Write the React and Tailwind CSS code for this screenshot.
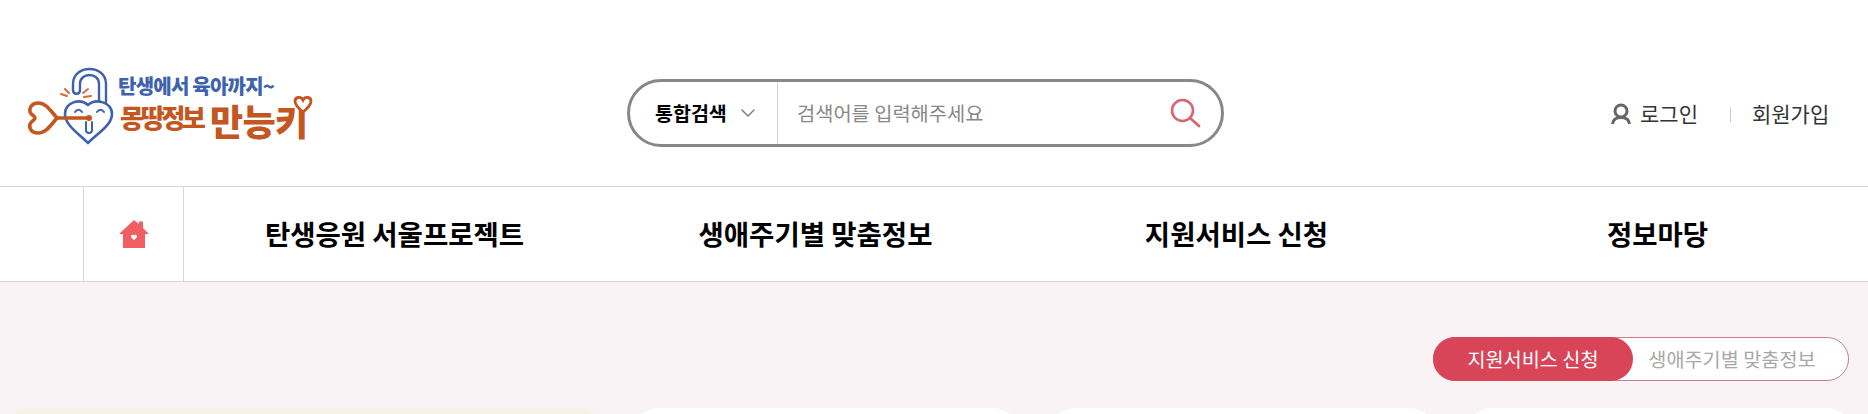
import { ChevronDown } from 'lucide-react';

const FONT = "font-['Noto_Sans_CJK_KR','Noto_Sans',sans-serif]";
const NAV = ['탄생응원 서울프로젝트', '생애주기별 맞춤정보', '지원서비스 신청', '정보마당'];

// logo is a drawing, the words in it stay real text
function Logo() {
    return (
        <svg width="300" height="90" viewBox="0 0 300 90" className="shrink-0">
            <g fill="none" strokeLinecap="round" strokeLinejoin="round">
                <path d="M86 42V24C86 4 53 4 53 24V30C53 35 60 35 60 30V24C60 12 79 12 79 24V40" stroke="#3f62ad" strokeWidth="2.4" />
                <path d="M68 83C58 73 45 65 45 54C45 42 60 38 68 45C76 38 92 42 92 54C92 65 78 73 68 83Z" stroke="#3f62ad" strokeWidth="2.6" />
                <path d="M55 52C57 49 60 49 62 52M77 52C79 49 82 49 84 52" stroke="#3f62ad" strokeWidth="2" />
                <path d="M66 62V70C66 74 72 74 72 70V62" stroke="#3f62ad" strokeWidth="2" />
                <path d="M41 34L47 36M45 29L49 33M63 33L68 29M64 37L71 36" stroke="#d9683c" strokeWidth="2" />
                <path d="M37 58C30 50 26 43 18 43C11 43 9 49 10 52C11 55 15 56 15 58C15 60 11 61 10 64C9 68 11 73 18 73C26 73 30 66 37 58Z" stroke="#c4561f" strokeWidth="3.6" />
                <path d="M37 58H68" stroke="#c4561f" strokeWidth="3.6" />
            </g>
            <circle cx="69" cy="58" r="3" fill="#c4561f" />
            <text x="98" y="34" fontSize="20" fontWeight="900" fill="#3f62ad" fontFamily="'Noto Sans CJK KR',sans-serif" textLength="157">탄생에서 육아까지~</text>
            <text x="100" y="68" fontSize="26" fontWeight="900" fill="#c4561f" fontFamily="'Noto Sans CJK KR',sans-serif" textLength="86">몽땅정보</text>
            <text x="190" y="76" fontSize="36" fontWeight="900" fill="#c4561f" fontFamily="'Noto Sans CJK KR',sans-serif" textLength="98">만능키</text>
            <path d="M283 52C278 48 275 45 275 41C275 37 281 36 283 40C285 36 291 37 291 41C291 45 288 48 283 52Z" fill="#ffffff" stroke="#c4561f" strokeWidth="2.8" />
        </svg>
    );
}

function SearchBox() {
    return (
        <div className="mt-[79px] w-[597px] h-[68px] shrink-0 flex items-center rounded-full border-[3px] border-[#888888] bg-white">
            <div className="w-[148px] h-full shrink-0 flex items-center border-r border-[#d5d5d5] pl-[25px]">
                <span className="text-[19.5px] font-bold text-black leading-none">통합검색</span>
                <ChevronDown size={24} strokeWidth={1.5} className="text-[#808080] ml-[9px]" />
            </div>
            <span className="ml-[19px] text-[19.8px] text-[#888888] leading-none">검색어를 입력해주세요</span>
            <svg width="32" height="32" viewBox="0 0 32 32" fill="none" className="ml-auto mr-[20px]">
                <circle cx="13.5" cy="13.5" r="10.5" stroke="#d96570" strokeWidth="2.6" />
                <path d="M21 21L30 29" stroke="#d96570" strokeWidth="2.8" strokeLinecap="round" />
            </svg>
        </div>
    );
}

function UserLinks() {
    return (
        <div className="mt-[101px] ml-[387px] flex items-center text-[21px] text-[#333333] leading-none">
            <svg width="20" height="22" viewBox="0 0 20 22" fill="none" className="mr-[9px] mt-[2px]">
                <circle cx="10" cy="8" r="6" stroke="#666666" strokeWidth="3" />
                <path d="M1.5 21C2 16.5 5 14.5 10 14.5S18 16.5 18.5 21" stroke="#666666" strokeWidth="3" />
            </svg>
            <span>로그인</span>
            <span className="w-px h-[15px] bg-[#cccccc] ml-[32px] mr-[21px] mt-[3px]" />
            <span>회원가입</span>
        </div>
    );
}

export default function App() {
    return (
        <div className={`w-[1868px] h-[414px] overflow-hidden bg-[#f9f3f6] ${FONT}`}>

            {/* header */}
            <header className="h-[187px] bg-white border-b border-[#d5d5dc] flex items-start">
                <div className="ml-[20px] mt-[60px] w-[607px] shrink-0 flex items-center"><Logo /></div>
                <SearchBox />
                <UserLinks />
            </header>

            {/* main nav */}
            <nav className="h-[95px] bg-white border-b border-[#d5d5dc] flex pl-[83px]">
                <div className="w-[101px] shrink-0 flex items-center justify-center border-x border-[#d5d5dc]">
                    <svg width="30" height="28" viewBox="0 0 30 28">
                        <path d="M15 0L20 4V1.5H24V8L30 14H26V28H4V14H0Z" fill="#ef5e62" />
                        <path d="M15 20C13 18.5 12 17.5 12 16.2C12 14.6 14.2 14.2 15 15.6C15.8 14.2 18 14.6 18 16.2C18 17.5 17 18.5 15 20Z" fill="#ffffff" />
                    </svg>
                </div>
                <div className="flex-1 grid grid-cols-4">
                    {NAV.map(label => (
                        <div key={label} className="flex items-center justify-center text-[27.5px] font-bold text-black leading-none">
                            {label}
                        </div>
                    ))}
                </div>
            </nav>

            {/* toggle */}
            <div className="flex justify-end pt-[55px] pr-[19px]">
                <div className="w-[416px] h-[44px] flex rounded-full border border-[#cd7e8a] bg-white">
                    <div className="w-[200px] -m-px h-[44px] rounded-full bg-[#d84559] flex items-center justify-center text-[19.7px] text-white leading-none">
                        지원서비스 신청
                    </div>
                    <div className="flex-1 flex items-center justify-center pr-[16px] text-[19.7px] text-[#a8a8a8] leading-none">
                        생애주기별 맞춤정보
                    </div>
                </div>
            </div>

            {/* cards, cut off by the window */}
            <div className="flex pt-[27px] pl-[2px]">
                <div className="w-[601px] h-[200px] shrink-0 rounded-[25px] bg-[#f5f3e6]" />
                <div className="w-[385px] h-[200px] shrink-0 rounded-[25px] bg-white ml-[30px]" />
                <div className="w-[385px] h-[200px] shrink-0 rounded-[25px] bg-white ml-[32px]" />
                <div className="w-[385px] h-[200px] shrink-0 rounded-[25px] bg-white ml-[32px]" />
            </div>
        </div>
    );
}
